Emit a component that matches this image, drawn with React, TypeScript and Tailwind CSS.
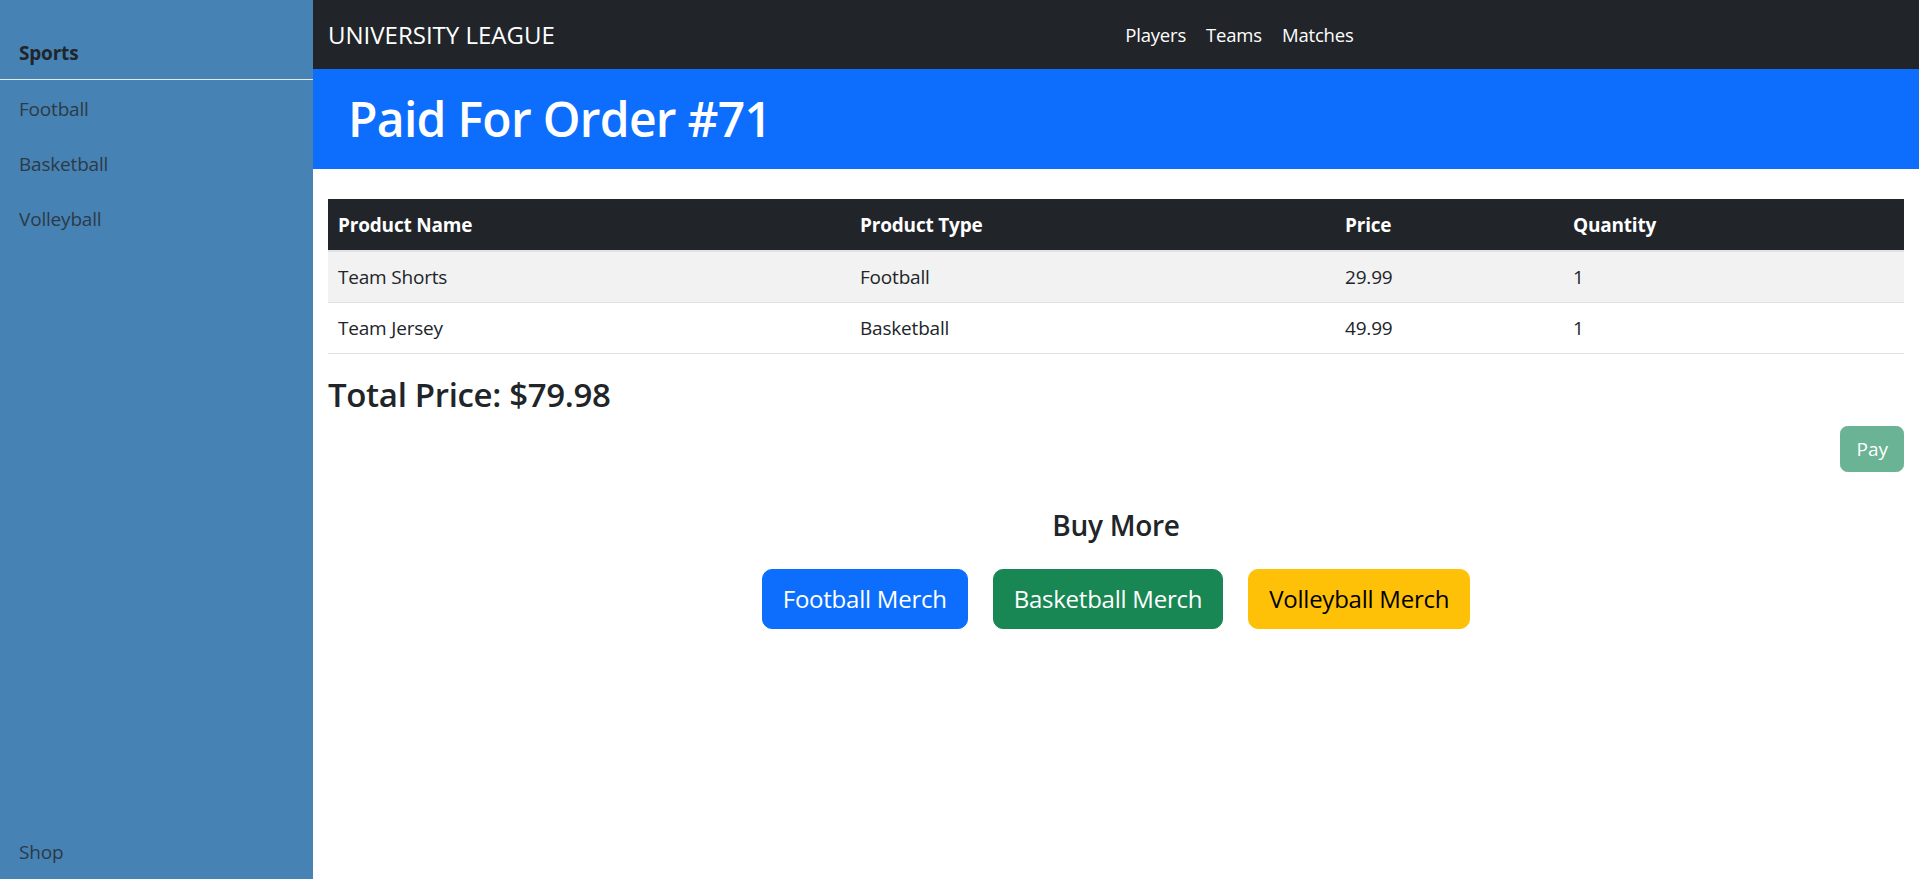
import React from "react";

const font = { fontFamily: '"Segoe UI", "Open Sans", "Noto Sans", sans-serif' };

export default function App() {
  const rows = [
    { name: "Team Shorts", type: "Football", price: "29.99", qty: "1" },
    { name: "Team Jersey", type: "Basketball", price: "49.99", qty: "1" },
  ];
  return (
    <div
      className="flex h-[879px] w-full overflow-hidden bg-white text-[#212529] font-['Segoe_UI','Open_Sans','Noto_Sans',sans-serif]"
      style={font}
    >
      {/* Sidebar */}
      <aside className="flex w-[313px] shrink-0 flex-col bg-[#4682b4]">
        <div className="border-b border-[#e4e9ee] pb-[11px] pl-[19px] pt-[38px] text-[19px] font-bold leading-[30px] tracking-[-0.01em] text-[#212529]">
          Sports
        </div>
        <nav className="flex flex-col pt-[1px]">
          {["Football", "Basketball", "Volleyball"].map((s) => (
            <a
              key={s}
              className="flex h-[55px] items-center pl-[19px] text-[19px] leading-[30px] tracking-[-0.01em] text-[#2c3a47]"
            >
              {s}
            </a>
          ))}
        </nav>
        <div className="mt-auto pb-[12px] pl-[19px] text-[19px] leading-[30px] tracking-[-0.01em] text-[#2c3a47]">
          Shop
        </div>
      </aside>

      {/* Main */}
      <main className="flex min-w-0 flex-1 flex-col">
        <header className="flex h-[69px] shrink-0 items-center bg-[#212529] px-[15px]">
          <span className="mr-[20px] text-[24px] leading-[37px] text-white">UNIVERSITY LEAGUE</span>
          <div className="flex flex-1 justify-center">
            {["Players", "Teams", "Matches"].map((l) => (
              <a key={l} className="px-[10px] text-[18.5px] leading-[30px] tracking-[-0.01em] text-white">
                {l}
              </a>
            ))}
          </div>
        </header>

        <div className="flex h-[100px] shrink-0 items-center bg-[#0d6efd] pl-[35px]">
          <h1 className="text-[48px] font-semibold leading-[60px] tracking-[-0.015em] text-white">
            Paid For Order #71
          </h1>
        </div>

        <div className="px-[15px] pt-[30px]">
          <table className="w-full table-fixed border-collapse text-[19px] leading-[30px] tracking-[-0.01em]">
            <colgroup>
              <col className="w-[522px]" />
              <col className="w-[485px]" />
              <col className="w-[228px]" />
              <col />
            </colgroup>
            <thead>
              <tr className="bg-[#212529] text-left text-white">
                <th className="border-b-2 border-[#dee2e6] px-[10px] pb-[10px] pt-[11px] font-bold">Product Name</th>
                <th className="border-b-2 border-[#dee2e6] px-[10px] pb-[10px] pt-[11px] font-bold">Product Type</th>
                <th className="border-b-2 border-[#dee2e6] px-[10px] pb-[10px] pt-[11px] font-bold">Price</th>
                <th className="border-b-2 border-[#dee2e6] px-[10px] pb-[10px] pt-[11px] font-bold">Quantity</th>
              </tr>
            </thead>
            <tbody>
              {rows.map((r, i) => (
                <tr key={r.name} className={i === 0 ? "bg-[#f2f2f2]" : "bg-white"}>
                  <td className="border-b border-[#dee2e6] px-[10px] py-[10px]">{r.name}</td>
                  <td className="border-b border-[#dee2e6] px-[10px] py-[10px]">{r.type}</td>
                  <td className="border-b border-[#dee2e6] px-[10px] py-[10px]">{r.price}</td>
                  <td className="border-b border-[#dee2e6] px-[10px] py-[10px]">{r.qty}</td>
                </tr>
              ))}
            </tbody>
          </table>

          <h3 className="mt-[20px] text-[33px] font-semibold leading-[42px] tracking-[-0.01em]">
            Total Price: $79.98
          </h3>

          <div className="mt-[10px] flex justify-end">
            <button
              disabled
              className="rounded-[7.5px] border border-[#6ab394] bg-[#6ab394] px-[15px] py-[7px] text-[19px] leading-[30px] text-white"
            >
              Pay
            </button>
          </div>

          <h4 className="mt-[35px] text-center text-[28px] font-semibold leading-[36px] tracking-[-0.01em]">
            Buy More
          </h4>

          <div className="mt-[26px] flex justify-center gap-[25px]">
            <button className="rounded-[10px] border border-[#0d6efd] bg-[#0d6efd] px-[20px] py-[10px] text-[24px] leading-[38px] tracking-[-0.01em] text-white">
              Football Merch
            </button>
            <button className="rounded-[10px] border border-[#198754] bg-[#198754] px-[20px] py-[10px] text-[24px] leading-[38px] tracking-[-0.01em] text-white">
              Basketball Merch
            </button>
            <button className="rounded-[10px] border border-[#ffc107] bg-[#ffc107] px-[20px] py-[10px] text-[24px] leading-[38px] tracking-[-0.01em] text-black">
              Volleyball Merch
            </button>
          </div>
        </div>
      </main>
    </div>
  );
}
